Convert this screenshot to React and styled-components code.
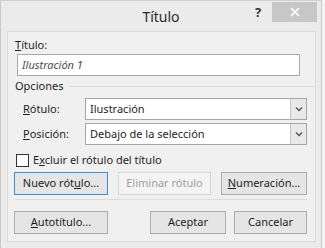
import React from "react";
import styled, { createGlobalStyle } from "styled-components";

const GlobalStyle = createGlobalStyle`
  html, body {
    margin: 0;
    padding: 0;
    background: #f4f4f4;
  }
  body {
    font-family: "Noto Sans", "Open Sans", sans-serif;
    font-size: 11px;
    color: #1e1e1e;
  }
`;

const Screen = styled.div`
  width: 325px;
  height: 248px;
  overflow: hidden;
  display: flex;
`;

const Window = styled.div`
  width: 322px;
  height: 248px;
  box-sizing: border-box;
  background: #ebebeb;
  border-left: 1px solid #c9c9c9;
  border-right: 1px solid #c9c9c9;
  border-top: 1px solid #d2d2d2;
  display: flex;
  flex-direction: column;
`;

const TitleBar = styled.div`
  height: 30px;
  display: grid;
  grid-template-columns: 1fr auto 1fr;
  align-items: start;
`;

const Title = styled.div`
  grid-column: 2;
  font-size: 14px;
  line-height: 20px;
  padding-top: 6px;
  color: #2b2b2b;
`;

const Controls = styled.div`
  grid-column: 3;
  justify-self: end;
  display: flex;
  align-items: flex-start;
  padding-top: 1px;
  margin-right: 4px;
`;

const Help = styled.div`
  width: 28px;
  text-align: center;
  font-weight: bold;
  font-size: 13px;
  line-height: 20px;
  color: #333;
`;

const Close = styled.div`
  width: 45px;
  height: 20px;
  background: #c7c7c7;
  display: flex;
  align-items: center;
  justify-content: center;
`;

const Panel = styled.div`
  margin: 0 5px 6px 6px;
  flex: 1;
  background: #f0f0f0;
  border: 1px solid #dadada;
  padding: 5px 8px 0 7px;
  display: flex;
  flex-direction: column;
`;

const Label = styled.div`
  line-height: 16px;
  margin-left: ${(p) => p.$indent || 0}px;
  width: ${(p) => (p.$width ? p.$width + "px" : "auto")};
  flex-shrink: 0;
  color: ${(p) => (p.$disabled ? "#a0a0a0" : "#1e1e1e")};
`;

const Key = styled.span`
  text-decoration: underline;
`;

const TextInput = styled.div`
  margin: 1px 7px 0 2px;
  height: 22px;
  box-sizing: border-box;
  border: 1px solid #a9a9a9;
  background: #fff;
  font-style: italic;
  color: #4e4e4e;
  padding-left: 4px;
  line-height: 20px;
`;

const GroupHead = styled.div`
  margin-top: 2px;
  display: flex;
  align-items: center;
  gap: 6px;
  margin-right: -8px;
`;

const Rule = styled.div`
  flex: 1;
  height: 1px;
  background: #dcdcdc;
`;

const Row = styled.div`
  display: flex;
  align-items: center;
  margin-top: ${(p) => p.$top || 0}px;
`;

const Select = styled.div`
  flex: 1;
  height: 22px;
  box-sizing: border-box;
  border: 1px solid #a6a6a6;
  background: #fff;
  display: flex;
`;

const SelectText = styled.div`
  flex: 1;
  line-height: 20px;
  padding-left: 4px;
`;

const Arrow = styled.div`
  width: 15px;
  border-left: 1px solid #c4c4c4;
  background: #e9e9e9;
  display: flex;
  align-items: center;
  justify-content: center;
`;

const Check = styled.div`
  width: 13px;
  height: 13px;
  box-sizing: border-box;
  border: 1px solid #333;
  background: #fff;
  margin: 0 4px 0 1px;
`;

const Buttons = styled.div`
  display: flex;
  justify-content: space-between;
  margin-top: ${(p) => p.$top || 0}px;
  margin-left: -1px;
`;

const Group = styled.div`
  display: flex;
  gap: 8px;
`;

const Button = styled.div`
  width: ${(p) => p.$w}px;
  height: 23px;
  box-sizing: border-box;
  text-align: center;
  line-height: 20px;
  border: 1px solid ${(p) => (p.$focus ? "#3c8fd3" : p.$disabled ? "#d4d4d4" : "#acacac")};
  background: ${(p) => (p.$disabled ? "#f4f4f4" : "#e5e5e5")};
  color: ${(p) => (p.$disabled ? "#9f9f9f" : "#1e1e1e")};
`;

const Chevron = () => (
  <svg width="8" height="6" viewBox="0 0 8 6">
    <polyline points="1,1.5 4,4.5 7,1.5" fill="none" stroke="#5a5a5a" strokeWidth="1.5" />
  </svg>
);

const CloseIcon = () => (
  <svg width="10" height="10" viewBox="0 0 10 10">
    <path d="M1 1 L9 9 M9 1 L1 9" stroke="#fff" strokeWidth="1.6" />
  </svg>
);

export default function App() {
  return (
    <Screen>
      <GlobalStyle />
      <Window>
        <TitleBar>
          <Title>Título</Title>
          <Controls>
            <Help>?</Help>
            <Close>
              <CloseIcon />
            </Close>
          </Controls>
        </TitleBar>
        <Panel>
          <Label>
            <Key>T</Key>ítulo:
          </Label>
          <TextInput>Ilustración 1</TextInput>
          <GroupHead>
            <Label>Opciones</Label>
            <Rule />
          </GroupHead>
          <Row $top={4}>
            <Label $indent={8} $width={62}>
              <Key>R</Key>ótulo:
            </Label>
            <Select>
              <SelectText>Ilustración</SelectText>
              <Arrow>
                <Chevron />
              </Arrow>
            </Select>
          </Row>
          <Row $top={3}>
            <Label $indent={8} $width={62}>
              <Key>P</Key>osición:
            </Label>
            <Select>
              <SelectText>Debajo de la selección</SelectText>
              <Arrow>
                <Chevron />
              </Arrow>
            </Select>
          </Row>
          <Row $top={7}>
            <Check />
            <Label>
              E<Key>x</Key>cluir el rótulo del título
            </Label>
          </Row>
          <Buttons $top={4}>
            <Button $w={94} $focus>
              Nuevo rót<Key>u</Key>lo...
            </Button>
            <Button $w={93} $disabled>
              Eliminar rótulo
            </Button>
            <Button $w={86}>
              <Key>N</Key>umeración...
            </Button>
          </Buttons>
          <Row $top={4}>
            <Rule />
          </Row>
          <Buttons $top={11}>
            <Button $w={94}>
              <Key>A</Key>utotítulo...
            </Button>
            <Group>
              <Button $w={76}>Aceptar</Button>
              <Button $w={73}>Cancelar</Button>
            </Group>
          </Buttons>
        </Panel>
      </Window>
    </Screen>
  );
}
